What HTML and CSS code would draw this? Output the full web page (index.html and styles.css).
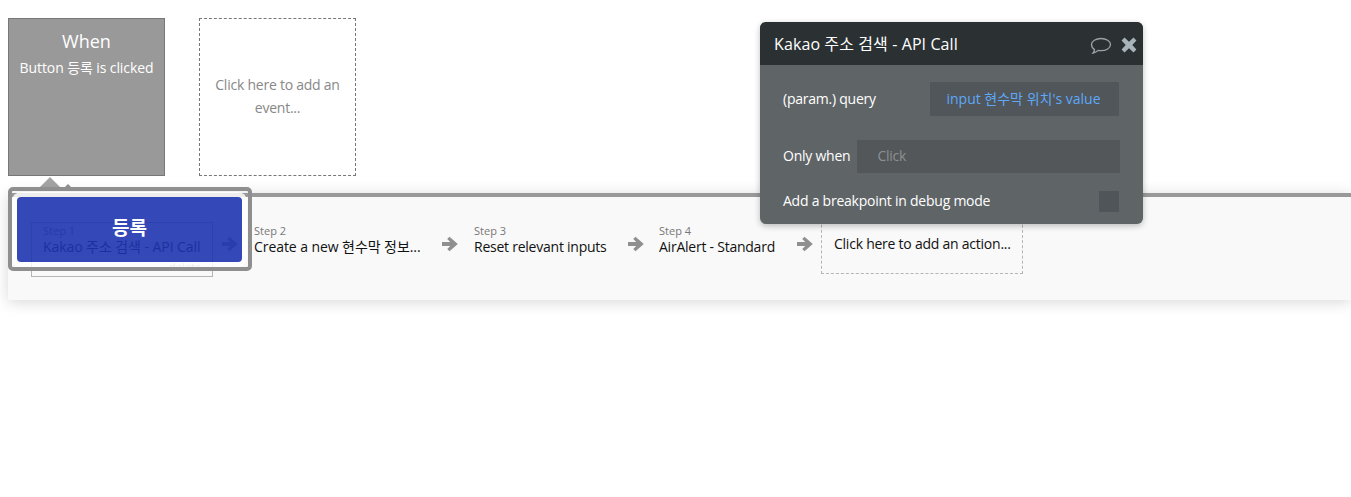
FILE: index.html
```html
<!DOCTYPE html>
<html lang="ko">
<head>
<meta charset="utf-8">
<title>Workflow</title>
<link rel="stylesheet" href="styles.css">
</head>
<body>
<div class="page">
  <div class="events">
    <div class="event event-active">
      <div class="event-title">When</div>
      <div class="event-sub">Button 등록 is clicked</div>
    </div>
    <div class="event event-add">Click here to add an event...</div>
  </div>
  <div class="tick tick-a"></div>
  <div class="tick tick-b"></div>
  <div class="track">
    <div class="step step-first">
      <div class="step-label">Step 1</div>
      <div class="step-name step-name-ko">Kakao 주소 검색 - API Call</div>
      <div class="step-delete">delete</div>
    </div>
    <svg class="arrow arrow-1" viewBox="0 0 16 16"><path d="M0 6h8.200L5.200 3 7.500.8 15.800 8l-8.300 7.200L5.200 13l3-3H0z"/></svg>
    <div class="step step-2"><div class="step-label">Step 2</div><div class="step-name step-name-ko">Create a new 현수막 정보...</div></div>
    <svg class="arrow arrow-2" viewBox="0 0 16 16"><path d="M0 6h8.200L5.200 3 7.500.8 15.800 8l-8.300 7.200L5.200 13l3-3H0z"/></svg>
    <div class="step step-3"><div class="step-label">Step 3</div><div class="step-name">Reset relevant inputs</div></div>
    <svg class="arrow arrow-3" viewBox="0 0 16 16"><path d="M0 6h8.200L5.200 3 7.500.8 15.800 8l-8.300 7.200L5.200 13l3-3H0z"/></svg>
    <div class="step step-4"><div class="step-label">Step 4</div><div class="step-name">AirAlert - Standard</div></div>
    <svg class="arrow arrow-4" viewBox="0 0 16 16"><path d="M0 6h8.200L5.200 3 7.500.8 15.800 8l-8.300 7.200L5.200 13l3-3H0z"/></svg>
    <div class="step-add">Click here to add an action...</div>
  </div>

  <div class="highlight">
    <div class="highlight-btn">등록</div>
  </div>

  <div class="popover">
    <div class="pop-head">
      <span class="pop-title">Kakao 주소 검색 - API Call</span>
      <svg class="pop-comment" viewBox="0 0 22 18"><path d="M11 1.500c5.200 0 9.500 2.700 9.500 6.100S16.200 13.700 11 13.700c-1 0-2-.1-2.900-.3-1.300 1.300-3 2.200-5 2.600.8-1 1.300-2.100 1.400-3.400C2.700 11.500 1.500 9.700 1.500 7.600 1.500 4.200 5.800 1.500 11 1.500z"/></svg>
      <svg class="pop-close" viewBox="0 0 16 16"><path d="M3.500.6 8 4.700 12.500.6 15.400 3.500 11.300 8l4.100 4.500-2.900 2.900L8 11.300l-4.500 4.100L.6 12.500 4.700 8 .6 3.500z"/></svg>
    </div>
    <div class="pop-body">
      <div class="pop-row pop-row-param">
        <span class="pop-label">(param.) query</span>
        <div class="pop-value">input 현수막 위치's value</div>
      </div>
      <div class="pop-row pop-row-when">
        <span class="pop-label">Only when</span>
        <div class="pop-click">Click</div>
      </div>
      <div class="pop-row pop-row-break">
        <span class="pop-label">Add a breakpoint in debug mode</span>
        <div class="pop-check"></div>
      </div>
    </div>
  </div>
</div>
</body>
</html>
```
FILE: styles.css
```css
* { box-sizing: border-box; }
html, body { margin: 0; padding: 0; background: #fff; }
body { font-family: "Open Sans", "Noto Sans CJK KR", sans-serif; font-size: 14px; }
.page { position: relative; width: 1351px; height: 497px; overflow: hidden; }

.events { display: flex; gap: 34px; padding: 18px 0 0 8px; }
.event { width: 157px; height: 158px; }
.event-active { background: #999; border: 1px solid #777; color: #fff; text-align: center; padding-top: 10px; }
.event-title { font-size: 18px; line-height: 25px; }
.event-sub { font-size: 14px; line-height: 20px; margin-top: 4px; letter-spacing: -.1px; }
.event-add { border: 1px dashed #777; color: #888; text-align: center; line-height: 23px; padding: 54px 10px 0; letter-spacing: -.24px; }

.tick { position: absolute; width: 0; height: 0; border-style: solid; border-color: transparent transparent #a3a3a3; }
.tick-a { left: 39px; top: 177px; border-width: 0 11px 11px; }
.tick-b { left: 61px; top: 184px; border-width: 0 7px 7px; border-bottom-color: #8f8f8f; }

.track { position: relative; height: 107px; margin: 17px 0 0 8px; background: #f9f9f9; border-top: 4px solid #999; box-shadow: 0 2px 14px rgba(0,0,0,.16); display: flex; align-items: flex-start; color: #111; }
.step { flex: none; }
.step-label { font-size: 11px; line-height: 14px; color: #777; }
.step-name { font-size: 14px; line-height: 18px; white-space: nowrap; letter-spacing: -.24px; }
.step-name-ko { letter-spacing: -.07px; }
.step-first { position: relative; width: 182px; height: 55px; margin: 25px 0 0 23px; border: 1px solid #b5b5b5; padding: 1px 0 0 11px; }
.step-delete { position: absolute; right: 11px; top: 37px; font-size: 11px; line-height: 13px; color: #999; }
.step-2 { margin: 27px 0 0 0; width: 188px; }
.step-3 { margin: 27px 0 0 0; width: 154px; }
.step-4 { margin: 27px 0 0 0; width: 138px; }
.arrow { flex: none; width: 16px; height: 16px; margin-top: 39px; fill: #8f8f8f; }
.arrow-1 { margin-left: 9px; margin-right: 16px; }
.arrow-2 { margin-right: 16px; }
.arrow-3 { margin-right: 15px; }
.arrow-4 { margin-right: 8px; }
.step-add { flex: none; width: 202px; height: 75px; margin-top: 2px; border: 1px dashed #b5b5b5; padding: 34px 0 0 12px; font-size: 14px; line-height: 20px; white-space: nowrap; letter-spacing: -.24px; }

.highlight { position: absolute; left: 8px; top: 187px; width: 244px; height: 84px; border: 4px solid #8f8f8f; border-radius: 5px; padding: 6px 6px 5px 5px; }
.highlight-btn { height: 65px; border-radius: 4px; background: rgba(30,52,175,.9); box-shadow: 0 0 0 5px rgba(255,255,255,.82); color: #fff; font-size: 19px; font-weight: 700; text-align: center; line-height: 62px; }

.popover { position: absolute; left: 760px; top: 22px; width: 383px; height: 202px; border-radius: 6px; overflow: hidden; background: #5f6567; box-shadow: 0 2px 6px rgba(0,0,0,.25); color: #fff; }
.pop-head { height: 43px; background: #2b3133; display: flex; align-items: center; padding: 0 6px 0 14px; }
.pop-title { font-size: 16px; letter-spacing: .1px; flex: 1; padding-bottom: 2px; }
.pop-comment { width: 22px; height: 18px; fill: none; stroke: #9aa3a6; stroke-width: 1.3; margin: 4px 9px 0 0; }
.pop-close { width: 16px; height: 16px; fill: #a9b4ba; margin-top: 3px; }
.pop-body { padding-left: 23px; }
.pop-row { display: flex; align-items: center; }
.pop-label { font-size: 14px; white-space: nowrap; letter-spacing: -.24px; padding-bottom: 2px; }
.pop-row-param { height: 34px; margin-top: 17px; justify-content: space-between; padding-right: 24px; }
.pop-value { width: 189px; height: 34px; background: #50565a; color: #5fa8f8; text-align: center; line-height: 34px; font-size: 14px; border-radius: 1px; padding-right: 2px; }
.pop-row-when { height: 33px; margin-top: 24px; gap: 7px; padding-right: 23px; }
.pop-click { flex: 1; height: 33px; background: #53575a; color: #8b8f91; padding-left: 20px; line-height: 31px; letter-spacing: -.24px; }
.pop-row-break { height: 21px; margin-top: 18px; justify-content: space-between; padding-right: 24px; }
.pop-check { width: 20px; height: 21px; background: #50555a; }
```
